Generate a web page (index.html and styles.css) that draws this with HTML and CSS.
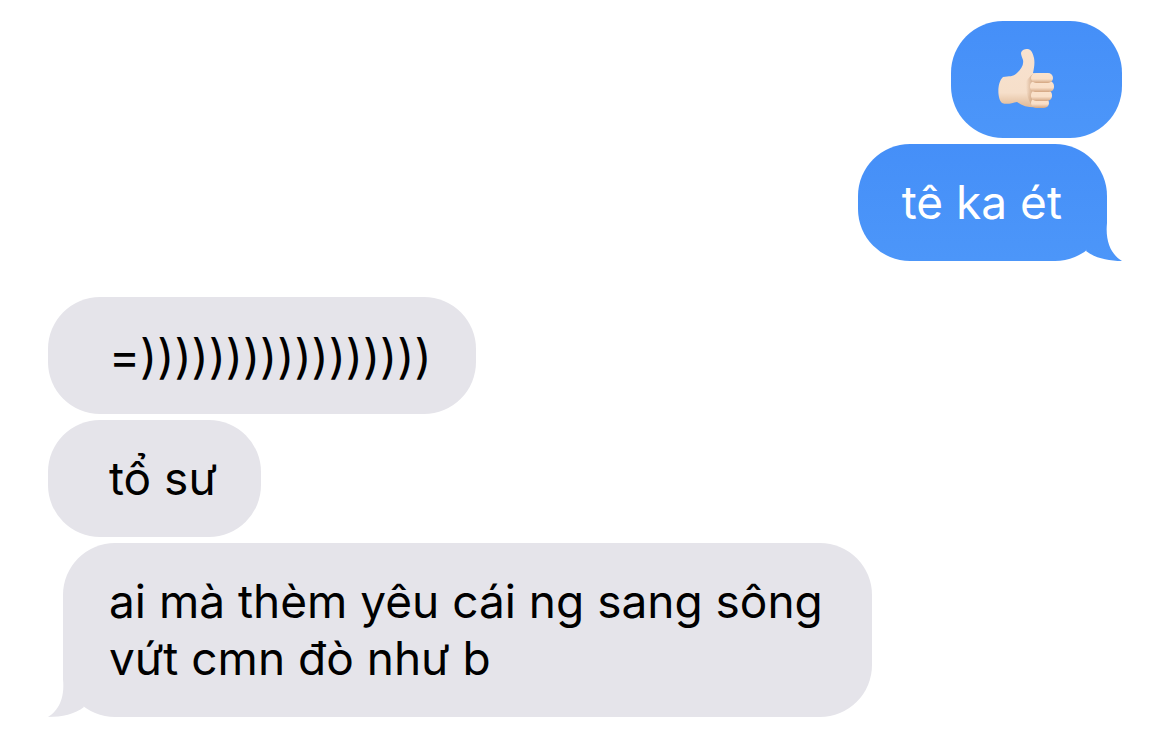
FILE: index.html
```html
<!DOCTYPE html>
<html lang="vi">
<head>
<meta charset="utf-8">
<meta name="viewport" content="width=device-width, initial-scale=1">
<title>Messages</title>
<link rel="stylesheet" href="styles.css">
</head>
<body>
<main class="chat">
  <section class="group group-sent">
    <div class="bubble sent">
      <svg class="thumb" viewBox="0 0 60 60" role="img" aria-label="Thumbs up">
        <defs>
          <linearGradient id="palm" x1="0" y1="0" x2="0" y2="1">
            <stop offset="0" stop-color="#f8e2cf"/>
            <stop offset="0.75" stop-color="#f6dfca"/>
            <stop offset="1" stop-color="#dfb997"/>
          </linearGradient>
          <linearGradient id="finger" x1="0" y1="0" x2="0" y2="1">
            <stop offset="0" stop-color="#fbe3cd"/>
            <stop offset="0.6" stop-color="#f9dfc8"/>
            <stop offset="1" stop-color="#d3a581"/>
          </linearGradient>
          <linearGradient id="crease" x1="0" y1="0" x2="1" y2="0">
            <stop offset="0" stop-color="#c99c78" stop-opacity="0"/>
            <stop offset="1" stop-color="#c99c78" stop-opacity="0.8"/>
          </linearGradient>
        </defs>
        <path fill="url(#palm)" d="M6 28C12 27 16 28 20 24C24 20 27 16 26 11C25 8 24 6 24 4C25 0 29 0 31 0C35 1 36 5 37 9C38 14 37 19 36 24L42 26V58C34 59 27 58 20 53C15 54 10 56 5 54C0 50 0 33 6 28Z"/>
        <path fill="url(#crease)" d="M29 32C32 29 33 27 36 25V57C32 54 30 46 29 40Z"/>
        <rect fill="url(#finger)" x="34" y="49" width="18" height="10" rx="5"/>
        <rect fill="url(#finger)" x="34" y="41" width="21" height="11" rx="5"/>
        <rect fill="url(#finger)" x="33" y="32" width="24" height="11" rx="5"/>
        <rect fill="url(#finger)" x="34" y="24" width="22" height="10" rx="5"/>
      </svg>
    </div>
    <div class="bubble sent tailed">tê ka ét
      <svg class="tail" viewBox="0 0 40 60" aria-hidden="true">
        <defs>
          <linearGradient id="tail-blue" gradientUnits="userSpaceOnUse" x1="0" y1="-57" x2="0" y2="60">
            <stop offset="0" stop-color="#458ff8"/>
            <stop offset="1" stop-color="#4c96f9"/>
          </linearGradient>
        </defs>
        <path fill="url(#tail-blue)" d="M25 0V22C23 42 30 54 40 60C26 60 13 57 4 50L22 10Z"/>
      </svg>
    </div>
  </section>
  <section class="group group-received">
    <div class="bubble received emoticon">=)))))))))))))))))</div>
    <div class="bubble received">tổ sư</div>
    <div class="bubble received tailed">ai mà thèm yêu cái ng sang sông vứt cmn đò như b
      <svg class="tail" viewBox="0 0 40 60" aria-hidden="true"><path d="M15 0V22C17 42 10 54 0 60C14 60 27 57 36 50L18 10Z"/></svg>
    </div>
  </section>
</main>
</body>
</html>
```
FILE: styles.css
```css
body {
  margin: 0;
  background: #fff;
  font-family: Inter, "Noto Sans", sans-serif;
  font-size: 46px;
  line-height: 57px;
}

.chat {
  display: flex;
  flex-direction: column;
  gap: 36px;
  padding: 21px 48px;
}

.group {
  display: flex;
  flex-direction: column;
  gap: 6px;
}

.group-sent {
  align-items: flex-end;
}

.group-received {
  align-items: flex-start;
}

.bubble {
  position: relative;
  box-sizing: border-box;
  max-width: 809px;
  padding: 30px 44px;
  border-radius: 52px;
}

.sent {
  padding-right: 60px;
  background: linear-gradient(#458ff8, #4c96f9);
  color: #fff;
}

.received {
  padding-left: 61px;
  background: #e5e4ea;
  color: #000;
}

.sent.tailed {
  margin-right: 15px;
  padding-right: 45px;
}

.received.tailed {
  margin-left: 15px;
  padding-left: 46px;
}

.emoticon {
  font-size: 47px;
}

.thumb {
  display: block;
  width: 60px;
  height: 60px;
  margin: -2px 5px -1px 2px;
}

.tail {
  position: absolute;
  bottom: 0;
  width: 40px;
  height: 60px;
}

.sent .tail {
  right: -15px;
}

.received .tail {
  left: -15px;
  fill: #e5e4ea;
}
```
